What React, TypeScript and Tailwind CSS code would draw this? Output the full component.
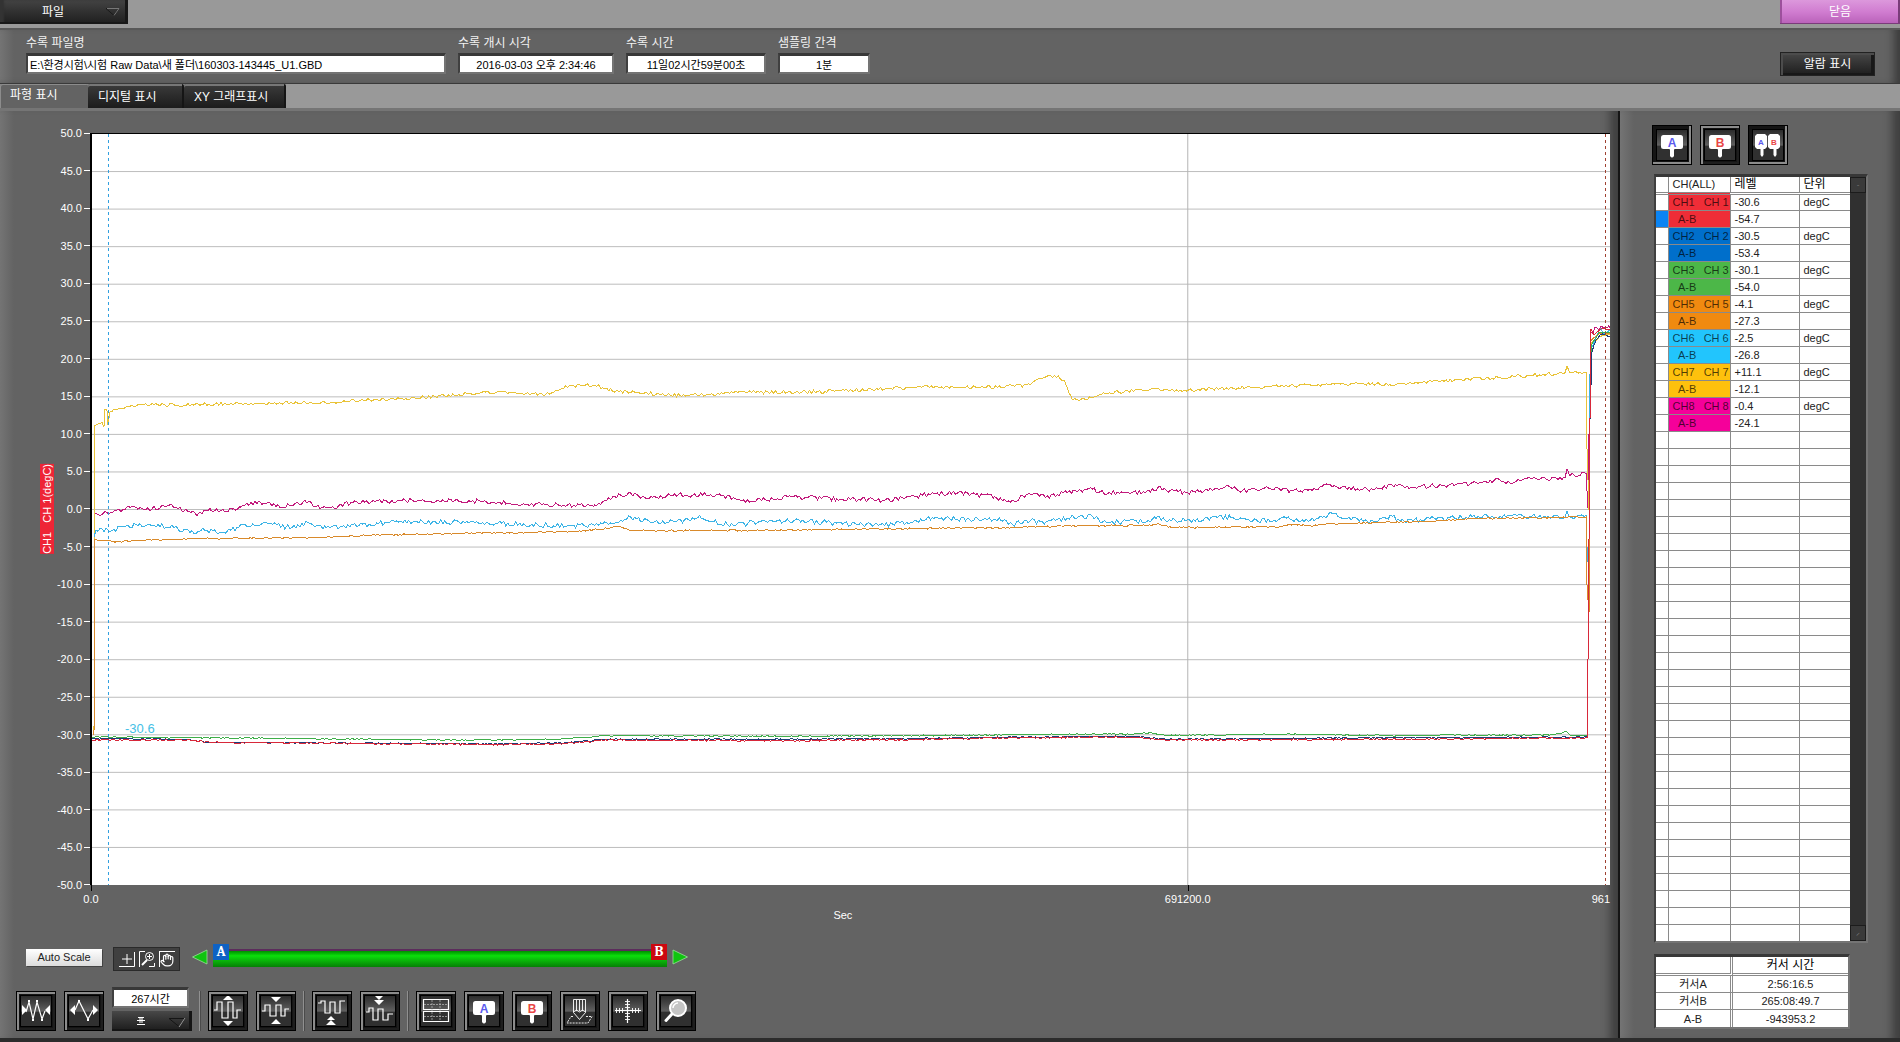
import { useState } from "react";
import type { ReactNode } from "react";
import { clsx } from "clsx";
import { Hand } from "lucide-react";

type Point = [number, number];

type Channel = {
  id: number;
  stroke: string;
  cell: string;
  level: string;
  diff: string;
  noise: number;
  points: Point[];
};

const PLOT_W = 1519;
const PLOT_H = 751;
const ROW_COUNT = 44;

const channels: Channel[] = [
  {
    id: 1,
    stroke: "#d8283a",
    cell: "bg-[#ef2d37]",
    level: "-30.6",
    diff: "-54.7",
    noise: 0.1,
    points: [
      [0, -30.7], [90, -30.7], [119, -31], [394, -31.3], [466, -31.2], [515, -30.7], [690, -30.8],
      [830, -30.6], [920, -30.4], [1045, -30.3], [1074, -30.7], [1300, -30.6], [1496, -30.4],
      [1497, -20], [1499, 12], [1500, 24], [1503, 23.2], [1509, 24], [1519, 24],
    ],
  },
  {
    id: 2,
    stroke: "#1d3f7a",
    cell: "bg-[#006fcb]",
    level: "-30.5",
    diff: "-53.4",
    noise: 0.08,
    points: [
      [0, -30.5], [90, -30.6], [119, -31], [394, -31.2], [466, -31.1], [515, -30.6], [690, -30.6],
      [830, -30.5], [920, -30.3], [1045, -30.2], [1074, -30.6], [1300, -30.4], [1496, -30.3],
      [1497, -20], [1499, 12], [1501, 21], [1505, 22.6], [1511, 23.4], [1519, 23],
    ],
  },
  {
    id: 3,
    stroke: "#3fae49",
    cell: "bg-[#4cb748]",
    level: "-30.1",
    diff: "-54.0",
    noise: 0.08,
    points: [
      [0, -30.3], [119, -30.4], [360, -30.7], [466, -30.6], [515, -30.1], [690, -30.2], [830, -30.1],
      [920, -30], [1045, -29.9], [1058, -29.7], [1074, -30.1], [1190, -29.9], [1300, -30.1],
      [1460, -30], [1476, -29.6], [1480, -30.1], [1496, -30.1], [1497, -20], [1499, 12],
      [1501, 22], [1508, 23.6], [1519, 23.6],
    ],
  },
  {
    id: 5,
    stroke: "#d98a2b",
    cell: "bg-[#f08a10]",
    level: "-4.1",
    diff: "-27.3",
    noise: 0.1,
    points: [
      [2, -30], [3, -4], [24, -4.3], [50, -4.1], [100, -3.9], [150, -3.8], [240, -3.7], [280, -3.4],
      [330, -3.3], [490, -2.9], [527, -2.3], [540, -2.8], [660, -2.8], [780, -2.6], [920, -2.4],
      [970, -2.2], [1060, -2.1], [1067, -1.9], [1080, -2.4], [1110, -2.4], [1190, -2.3], [1202, -2],
      [1220, -2.2], [1240, -1.9], [1330, -1.6], [1390, -1.2], [1495, -1], [1496, -10], [1498, -14],
      [1499, 12], [1500, 22.5], [1508, 23.4], [1519, 23.4],
    ],
  },
  {
    id: 6,
    stroke: "#3db4e6",
    cell: "bg-[#22c5fd]",
    level: "-2.5",
    diff: "-26.8",
    noise: 0.35,
    points: [
      [2, -3.6], [4, -2.8], [20, -2.8], [34, -2.2], [84, -2.2], [86, -2.6], [102, -3.2], [109, -2.8],
      [124, -3], [139, -2.8], [151, -2], [179, -1.9], [194, -2.4], [217, -1.8], [234, -2.4],
      [259, -2.1], [309, -1.6], [394, -1.8], [478, -2.2], [503, -2.1], [515, -1.8], [539, -1],
      [569, -1.9], [606, -1.1], [636, -2], [697, -1.5], [745, -1.8], [787, -2.1], [842, -1.2],
      [909, -1.4], [921, -2], [939, -1.5], [954, -1.7], [979, -1.1], [1001, -0.9], [1011, -1.7],
      [1059, -1.6], [1066, -0.9], [1074, -1.5], [1094, -1.5], [1139, -1], [1159, -1.6], [1189, -1.2],
      [1219, -1.5], [1241, -0.5], [1254, -1.2], [1281, -1.5], [1301, -0.9], [1309, -1.5], [1363, -1.1],
      [1439, -0.9], [1474, -1], [1476, -0.2], [1479, -1], [1495, -0.8], [1496, -5], [1498, -9],
      [1499, 18], [1500, 21.5], [1508, 23.8], [1519, 23.8],
    ],
  },
  {
    id: 7,
    stroke: "#e9c338",
    cell: "bg-[#fec10d]",
    level: "+11.1",
    diff: "-12.1",
    noise: 0.22,
    points: [
      [2, -30], [3, 11.2], [10, 11.6], [12, 11], [13, 13.4], [15, 13.2], [16, 11.2], [18, 13],
      [24, 13.3], [50, 13.9], [109, 14], [200, 14.2], [240, 14.3], [329, 14.9], [394, 15.6],
      [418, 15.6], [454, 15.3], [478, 16.5], [503, 16.5], [527, 15.7], [588, 15.2], [660, 15.6],
      [733, 15.7], [830, 16.3], [909, 16.3], [939, 16.6], [949, 17.5], [967, 17.8], [974, 16.8],
      [981, 14.6], [994, 14.6], [1014, 15.5], [1059, 16], [1097, 15.9], [1159, 16.3], [1259, 16.7],
      [1309, 16.7], [1363, 17.2], [1424, 17.7], [1474, 18.2], [1476, 19.1], [1479, 18.2], [1495, 18.3],
      [1496, 8], [1498, 0], [1499, 14], [1500, 22], [1508, 23], [1519, 23.2],
    ],
  },
  {
    id: 8,
    stroke: "#c21a7c",
    cell: "bg-[#f5009a]",
    level: "-0.4",
    diff: "-24.1",
    noise: 0.3,
    points: [
      [3, -0.6], [19, -0.4], [34, 0.2], [44, 0.3], [54, 0], [74, 0.4], [84, 0.3], [99, -0.4],
      [106, -0.6], [119, -0.1], [134, -0.2], [149, 0.3], [151, 0.6], [166, 1], [184, 0.4], [199, 0.6],
      [217, 1.1], [224, 0.4], [239, 0.3], [259, 0.9], [284, 1.1], [329, 1.2], [394, 1.1], [454, 0.6],
      [503, 0.6], [521, 1.7], [539, 2.2], [557, 1.4], [587, 2], [624, 1.9], [660, 1.1], [696, 1.7],
      [745, 1.4], [793, 1.2], [842, 2.1], [866, 2.2], [903, 1.7], [923, 1.1], [931, 1.9], [946, 2.1],
      [956, 1.8], [989, 2.6], [1001, 2.7], [1012, 2.2], [1059, 2.3], [1067, 3], [1071, 2.6],
      [1094, 2.3], [1109, 2.5], [1139, 3], [1151, 2.5], [1184, 2.9], [1199, 2.5], [1219, 2.7],
      [1239, 3.3], [1246, 3], [1281, 2.7], [1304, 3.3], [1314, 2.9], [1329, 3.1], [1363, 3.2],
      [1389, 3.6], [1409, 3.9], [1419, 3.5], [1439, 4.2], [1474, 4.2], [1476, 5.4], [1479, 4.5],
      [1495, 4.8], [1497, 0.2], [1498, 10], [1500, 23.6], [1506, 24.2], [1519, 24.2],
    ],
  },
];

const toY = (v: number) => ((50 - v) / 100) * PLOT_H;

// Resamples the key points every 2px and adds a repeatable sensor jitter.
function tracePath({ id, points, noise }: Channel) {
  let seed = id * 7919;
  const random = () => {
    seed = (seed * 16807) % 2147483647;
    return seed / 2147483647 - 0.5;
  };
  const out: string[] = [];
  for (let i = 0; i < points.length - 1; i++) {
    const [x0, v0] = points[i];
    const [x1, v1] = points[i + 1];
    out.push(`${x0} ${toY(v0).toFixed(1)}`);
    for (let x = x0 + 2; x < x1; x += 2) {
      const v = v0 + ((v1 - v0) * (x - x0)) / (x1 - x0);
      out.push(`${x} ${toY(v + random() * noise * 2).toFixed(1)}`);
    }
  }
  const [lx, lv] = points[points.length - 1];
  out.push(`${lx} ${toY(lv).toFixed(1)}`);
  return `M${out.join("L")}`;
}

// CH1 is the selected channel, so it is painted last and stays on top.
const traces = channels.map((c) => ({ id: c.id, stroke: c.stroke, d: tracePath(c) })).reverse();
const yTicks = Array.from({ length: 21 }, (_, i) => 50 - i * 5);

const fields = [
  { id: "file", label: "수록 파일명", value: "E:\\환경시험\\시험 Raw Data\\새 폴더\\160303-143445_U1.GBD", box: "w-[420px]", align: "text-left" },
  { id: "start", label: "수록 개시 시각", value: "2016-03-03 오후 2:34:46", box: "w-[156px]", align: "text-center" },
  { id: "length", label: "수록 시간", value: "11일02시간59분00초", box: "w-[140px]", align: "text-center" },
  { id: "interval", label: "샘플링 간격", value: "1분", box: "w-[92px]", align: "text-center" },
];

const tabs = [
  { label: "파형 표시", width: "w-[88px]" },
  { label: "디지털 표시", width: "w-[96px]" },
  { label: "XY 그래프표시", width: "w-[102px]" },
];

const cursorRows = [
  ["커서A", "2:56:16.5"],
  ["커서B", "265:08:49.7"],
  ["A-B", "-943953.2"],
];

const sunken =
  "border-2 border-t-[3px] border-t-[#383838] border-l-[#404040] border-r-[#747474] border-b-[#747474]";

function IconButton({ label, pressed, children }: { label: string; pressed?: boolean; children: ReactNode }) {
  return (
    <button
      aria-label={label}
      className={clsx(
        "size-10 shrink-0 border border-black bg-[#141414] p-[3px]",
        pressed
          ? "shadow-[inset_-2px_-2px_0_#8c8c8c]"
          : "shadow-[inset_2px_2px_0_#8c8c8c,inset_-2px_-2px_0_#1e1e1e]"
      )}>
      <span className="block size-8 border border-black bg-linear-to-b from-[#2c2c2c] via-[#606060] via-50% to-[#303030] to-55%">
        <svg viewBox="5 5 30 30" className="size-[30px]" fill="none" stroke="white" strokeWidth="1.2">
          {children}
        </svg>
      </span>
    </button>
  );
}

function Marker({ letter, color }: { letter: string; color: string }) {
  return (
    <g stroke="none">
      <rect x="9" y="10" width="22" height="14" rx="2.5" fill="white" />
      <path d="M17 23h6l-1 2v6q-2 3-4 0v-6z" fill="white" />
      <text x="20" y="21.500" textAnchor="middle" fontSize="12" fontWeight="bold" fill={color}>
        {letter}
      </text>
    </g>
  );
}

function MarkerPair() {
  return (
    <g stroke="none" fontSize="8" fontWeight="bold" textAnchor="middle">
      <path d="M9 9h8l2 2v11l-2 2h-1.500v6l-1.500 2-1.500-2v-6H9l-2-2V11zM22 9h8l2 2v11l-2 2h-1.500v6L27 32l-1.500-2v-6H22l-2-2V11z" fill="white" />
      <text x="13" y="19.500" fill="#5a5aee">A</text>
      <text x="26" y="19.500" fill="#e84646">B</text>
    </g>
  );
}

function Chart() {
  return (
    <div className="flex grow flex-col">
      <div className="flex grow">
        <div className="flex w-[42px] items-center justify-end">
          <span className="rotate-180 whitespace-pre bg-[#ee2536] text-[11px] leading-[14px] text-white [writing-mode:vertical-rl]">
            {"CH1   CH 1(degC)"}
          </span>
        </div>
        <div className="-my-2 flex w-9 flex-col justify-between text-right text-[11px] leading-4 text-white">
          {yTicks.map((t) => (
            <div key={t} className="flex items-center justify-end gap-0.5">
              {t.toFixed(1)}
              <span className="h-px w-1.5 bg-white" />
            </div>
          ))}
        </div>
        <div className="relative grow border-l-2 border-t border-black bg-white">
          <svg
            className="absolute inset-0 size-full"
            viewBox={`0 0 ${PLOT_W} ${PLOT_H}`}
            preserveAspectRatio="none"
            fill="none"
            shapeRendering="crispEdges">
            {yTicks.slice(1, -1).map((t) => (
              <line key={t} x1="0" x2={PLOT_W} y1={toY(t)} y2={toY(t)} stroke="#bdbdbd" />
            ))}
            <line x1="1096.500" x2="1096.500" y1="0" y2={PLOT_H} stroke="#b4b4b4" />
            {traces.map((t) => (
              <path key={t.id} d={t.d} stroke={t.stroke} vectorEffect="non-scaling-stroke" />
            ))}
            <line x1="16.500" x2="16.500" y1="0" y2={PLOT_H} stroke="#2f9fe0" strokeDasharray="3 3" />
            <line x1="1514.500" x2="1514.500" y1="0" y2={PLOT_H} stroke="#a04030" strokeDasharray="3 3" />
          </svg>
          <span className="absolute left-[33px] top-[79%] -translate-y-1.5 text-[13px] leading-4 text-[#45bfe6]">
            -30.6
          </span>
        </div>
      </div>
      <div className="relative ml-[79px] h-[38px] text-[11px] leading-4 text-white">
        <span className="absolute left-0 top-0 h-1.5 w-px bg-black" />
        <span className="absolute left-0 top-1.5 -translate-x-1/2">0.0</span>
        <span className="absolute left-[72.200%] top-0 h-1.5 w-px bg-black" />
        <span className="absolute left-[72.200%] top-1.5 -translate-x-1/2">691200.0</span>
        <span className="absolute right-0 top-1.5">961</span>
        <span className="absolute left-[49.500%] top-[22px] -translate-x-1/2">Sec</span>
      </div>
    </div>
  );
}

function CursorRange() {
  const [a, setA] = useState(0);
  const [b, setB] = useState(100);

  return (
    <div className="ml-3 flex h-7 items-center">
      <button aria-label="이전" className="size-4">
        <svg viewBox="0 0 16 16" className="size-4">
          <path d="M0.500 8 15 1V15Z" fill="#10c410" stroke="#9ae09a" strokeWidth="0.800" />
        </svg>
      </button>
      <div className="relative mx-[5px] h-7 w-[454px] pt-1.5">
        <div className="h-[18px] w-full border-t-2 border-[#5c2c5c] bg-linear-to-b from-[#009000] via-[#0ce00c] via-30% to-[#068006]" />
        <span
          className="absolute top-px flex size-4 items-center justify-center bg-[#0e62c4] font-serif text-sm font-bold leading-4 text-white"
          style={{ left: `${a * 4.38}px` }}>
          A
        </span>
        <span
          className="absolute top-px flex size-4 items-center justify-center bg-[#cc0810] font-serif text-sm font-bold leading-4 text-white"
          style={{ left: `${b * 4.38}px` }}>
          B
        </span>
        <input type="range" aria-label="커서A" value={a} onChange={(e) => setA(Math.min(+e.target.value, b))} className="absolute left-0 top-0 h-3.5 w-full opacity-0" />
        <input type="range" aria-label="커서B" value={b} onChange={(e) => setB(Math.max(+e.target.value, a))} className="absolute bottom-0 left-0 h-3.5 w-full opacity-0" />
      </div>
      <button aria-label="다음" className="size-4">
        <svg viewBox="0 0 16 16" className="size-4">
          <path d="M15.500 8 1 1V15Z" fill="#10c410" stroke="#9ae09a" strokeWidth="0.800" />
        </svg>
      </button>
    </div>
  );
}

function Separator() {
  return (
    <div className="flex w-4 justify-center">
      <span className="w-0.5 border-l border-[#909090] bg-[#4a4a4a]" />
    </div>
  );
}

function Toolbar() {
  return (
    <div className="flex h-10">
      <div className="flex gap-2">
        <IconButton label="시간축 축소">
          <path d="M6 14v10l5-5zM34 14v10l-5-5z" fill="white" stroke="none" />
          <path d="m10 21 3-10 4 17 4-17 5 17 3-8" />
          <path d="M12 9h2v2h-2zM20 9h2v2h-2zM16 28h2v2h-2zM25 28h2v2h-2z" fill="white" stroke="none" />
        </IconButton>
        <IconButton label="시간축 확대">
          <path d="M11 14v10l-5-5zM29 14v10l5-5z" fill="white" stroke="none" />
          <path d="m11 19 4-9 9 18 5-9" />
          <path d="M14 9h2v2h-2zM23 28h2v2h-2z" fill="white" stroke="none" />
        </IconButton>
        <div className="w-20">
          <input
            readOnly
            aria-label="표시 시간"
            value="267시간"
            className={clsx("-mt-1 block h-[21px] w-[77px] bg-white text-center text-[11px] leading-4 text-black", sunken)}
          />
          <div className="relative mt-[3px] h-5 bg-linear-to-b from-[#484848] to-[#1c1c1c] shadow-[inset_-3px_-2px_0_#151515]">
            <select aria-label="표시 시간 선택" className="size-full appearance-none opacity-0">
              <option>267시간</option>
            </select>
            <svg viewBox="0 0 80 20" className="pointer-events-none absolute inset-0" fill="none" stroke="white">
              <path d="M26 6.500h6M25 9.500h8M25 13.500h8M28 7v5M30 7v5" />
              <path d="M57 7.500h16l-6 8z" stroke="#151515" />
              <path d="m73 7-6 9" stroke="#9a9a9a" />
            </svg>
          </div>
        </div>
      </div>
      <Separator />
      <div className="flex gap-2">
        <IconButton label="진폭 확대">
          <path d="m20 4 5 5H15zM15 30h10l-5 5z" fill="white" stroke="none" />
          <path d="M6 19h3v-8h5v16h6V11h5v16h4v-8h4" />
        </IconButton>
        <IconButton label="진폭 축소">
          <path d="M15 6h10l-5 5zM20 28l5 5H15z" fill="white" stroke="none" />
          <path d="M6 20h3v-6h5v11h6V14h5v11h4v-7h4" />
        </IconButton>
      </div>
      <Separator />
      <div className="flex gap-2">
        <IconButton label="위로 이동">
          <path d="M6 12h3v-2h4v12h5V11h5v11h5V10h5" />
          <path d="m19 25 4 4h-8zM19 29l5 5H14z" fill="white" stroke="none" />
        </IconButton>
        <IconButton label="아래로 이동">
          <path d="M6 21h3v-4h4v12h5V18h5v11h5v-6h5" />
          <path d="M15 5h8l-4 4zM14 9h10l-5 5z" fill="white" stroke="none" />
        </IconButton>
      </div>
      <Separator />
      <div className="flex gap-2">
        <IconButton label="그리드">
          <path d="M7.500 8.500h25v10h-25zM7.500 20.500h25v10h-25z" />
          <path d="M8 13.500h24M8 25.500h24M16 9v21M24 9v21" strokeWidth="0.700" strokeDasharray="2 1" stroke="#bbb" />
        </IconButton>
        <IconButton label="커서 A">
          <Marker letter="A" color="#5a5aee" />
        </IconButton>
        <IconButton label="커서 B">
          <Marker letter="B" color="#e84646" />
        </IconButton>
        <IconButton label="메모">
          <path d="M13.500 8.500h12v13l-6 7-6-7zM16.500 9v11M19.500 9v11M22.500 9v11M13.500 21l3-2 3 2 3-2 3 2" strokeWidth="0.900" />
          <path d="M11 25.500h2M26 25.500h6l-4 6.500H7l4-6.500" strokeDasharray="2 1" strokeWidth="0.900" />
        </IconButton>
        <IconButton label="눈금">
          <path d="M7 19.500h26M19.500 8v24" />
          <path d="M8.500 17v5M11.500 17v5M14.500 17v5M24.500 17v5M27.500 17v5M30.500 17v5M17 10.500h5M17 13.500h5M17 16.500h5M17 22.500h5M17 25.500h5M17 28.500h5" strokeWidth="0.900" />
        </IconButton>
        <IconButton label="검색">
          <path d="m16 23-6 6.500" strokeWidth="3" strokeLinecap="round" />
          <circle cx="22" cy="17" r="8" fill="#c4c4c4" strokeWidth="2" />
          <path d="M17 17a5 5 0 0 1 5-5" stroke="#fff" strokeWidth="1.500" />
        </IconButton>
      </div>
    </div>
  );
}

function ChannelTable() {
  const rows = channels.flatMap((c) => [
    { cell: c.cell, name: `CH${c.id}   CH ${c.id}`, level: c.level, unit: "degC" },
    { cell: c.cell, name: "  A-B", level: c.diff, unit: "" },
  ]);

  return (
    <div className={clsx("ml-[34px] flex w-[214px]", sunken)}>
      <table className="w-[194px] table-fixed border-collapse bg-white text-[11px] leading-[14px] text-[#222]">
        <colgroup>
          <col className="w-[12px]" />
          <col className="w-[62px]" />
          <col className="w-[69px]" />
          <col className="w-[51px]" />
        </colgroup>
        <thead>
          <tr className="h-4 border-b-3 border-double border-[#8a8a8a] text-left">
            <th className="border-r border-[#8a8a8a]" />
            <th className="border-r border-[#8a8a8a] pl-1 font-normal">CH(ALL)</th>
            <th className="border-r border-[#8a8a8a] pl-1 text-xs leading-[14px] font-normal text-black">레벨</th>
            <th className="pl-1 text-xs leading-[14px] font-normal text-black">단위</th>
          </tr>
        </thead>
        <tbody>
          {Array.from({ length: ROW_COUNT }, (_, i) => {
            const row = rows[i];
            return (
              <tr key={i} className={clsx("h-[17px]", i < ROW_COUNT - 1 && "border-b border-[#8a8a8a]")}>
                <td className={clsx("border-r border-[#8a8a8a]", i === 1 && "bg-[#0a84f4]")} />
                <td className={clsx("whitespace-pre border-r border-[#8a8a8a] pl-1 text-black/70", row?.cell)}>{row?.name}</td>
                <td className="border-r border-[#8a8a8a] pl-1">{row?.level}</td>
                <td className="pl-1">{row?.unit}</td>
              </tr>
            );
          })}
        </tbody>
      </table>
      <div className="flex grow flex-col justify-between bg-[#303030]">
        <button aria-label="위로" className="h-4 border border-[#1c1c1c] bg-[#3a3a3a] text-[8px] leading-3 text-[#777]">
          -
        </button>
        <button aria-label="아래로" className="h-4 border border-[#1c1c1c] bg-[#3a3a3a] text-[8px] leading-3 text-[#888]">
          ⸝
        </button>
      </div>
    </div>
  );
}

function CursorTable() {
  return (
    <table className={clsx("ml-[34px] w-[196px] table-fixed border-separate border-spacing-0 bg-white text-center text-[11px] leading-4 text-[#222]", sunken)}>
      <colgroup>
        <col className="w-[77px]" />
        <col />
      </colgroup>
      <thead>
        <tr className="h-[19px]">
          <th className="border-b-3 border-r-3 border-double border-[#8a8a8a]" />
          <th className="border-b-3 border-double border-[#8a8a8a] text-xs leading-4 font-normal text-black">커서 시간</th>
        </tr>
      </thead>
      <tbody>
        {cursorRows.map(([name, value], i) => (
          <tr key={name} className="h-[17px]">
            <td className={clsx("border-r-3 border-[#8a8a8a] [border-right-style:double]", i < 2 && "border-b")}>{name}</td>
            <td className={clsx("border-[#8a8a8a]", i < 2 && "border-b")}>{value}</td>
          </tr>
        ))}
      </tbody>
    </table>
  );
}

export default function App() {
  const [activeTab, setActiveTab] = useState(0);

  return (
    <div className="flex min-h-screen flex-col bg-[#636363] font-['Liberation_Sans','Noto_Sans_CJK_KR',sans-serif]">
      <header className="flex h-7 items-start justify-between bg-[#999999]">
        <button className="flex h-6 w-32 items-center bg-linear-to-b from-[#444] to-[#1e1e1e] pl-[42px] text-xs text-white shadow-[inset_-3px_-2px_0_#181818,inset_4px_0_2px_#333]">
          파일
          <svg viewBox="0 0 16 10" className="ml-auto mr-[7px] h-2.5 w-4" fill="none">
            <path d="M1 1.500h13l-5 7z" stroke="#191919" />
            <path d="M2 1.500h12l-5 7" stroke="#777" />
          </svg>
        </button>
        <button className="h-6 w-[120px] bg-linear-to-b from-[#dc98dc] via-[#d07cd0] to-[#b860b8] text-xs text-white shadow-[inset_-2px_-1px_0_#7a3c7a,inset_2px_0_0_#9c509c]">
          닫음
        </button>
      </header>

      <section className="flex h-14 items-start border-b border-[#3a3a3a] bg-linear-to-r from-[#747474] to-[#636363] to-[14px] pl-[26px] pr-[25px] shadow-[inset_0_2px_0_#585858,inset_-10px_0_8px_-4px_#3c3c3c]">
        <div className="flex gap-3">
          {fields.map((f) => (
            <label key={f.id} htmlFor={f.id} className="pt-[6px] text-xs leading-[18px] text-[#f2f2f2]">
              {f.label}
              <input
                id={f.id}
                readOnly
                defaultValue={f.value}
                className={clsx("mt-px block h-[21px] bg-white px-0.5 text-[11px] leading-4 text-black", sunken, f.box, f.align)}
              />
            </label>
          ))}
        </div>
        <button className="ml-auto mt-6 h-6 w-[95px] border border-[#222] bg-linear-to-b from-[#484848] to-[#1e1e1e] text-xs text-white shadow-[inset_2px_2px_0_#4c4c4c,inset_-3px_-2px_0_#181818]">
          알람 표시
        </button>
      </section>

      <nav role="tablist" className="flex h-6 bg-[#999999]">
        {tabs.map((t, i) => (
          <button
            key={t.label}
            role="tab"
            aria-selected={i === activeTab}
            onClick={() => setActiveTab(i)}
            className={clsx(
              "whitespace-nowrap rounded-t-xs px-2.5 text-left text-xs text-white",
              t.width,
              i === activeTab
                ? "bg-[#636363] pb-0.5 shadow-[inset_1px_1px_0_#8c8c8c]"
                : "border-r-2 border-[#151515] bg-linear-to-b from-[#3c3c3c] to-[#1c1c1c] pt-0.5 shadow-[inset_0_2px_0_#777]"
            )}>
            {t.label}
          </button>
        ))}
      </nav>

      <main className="flex grow border-b-4 border-t-[3px] border-b-[#2c2c2c] border-t-[#757575]">
        <section className="flex grow flex-col border-r-2 border-[#151515] bg-linear-to-r from-[#747474] to-[#636363] to-[14px] pb-[7px] pt-[22px] shadow-[inset_-14px_0_8px_-6px_#404040]">
          <div className="flex grow flex-col pl-3 pr-2">
            <Chart />
          </div>
          <div className="mt-5 flex h-7 items-center pl-[26px]">
            <button className="h-[17px] w-[76px] bg-linear-to-b from-white to-[#dcdcdc] text-[11px] leading-4 text-[#222] shadow-[1px_1px_0_#444]">
              Auto Scale
            </button>
            <div className="ml-[11px] mt-1 flex h-6 w-[67px] items-center justify-center gap-1 border border-[#2a2a2a] bg-[#404040]">
              <button aria-label="십자 커서" className="size-4">
                <svg viewBox="0 0 16 16" className="size-4" fill="none" stroke="white">
                  <path d="M15.500 1v14.500H0M8 3v10M3 8h10" />
                </svg>
              </button>
              <button aria-label="확대" className="size-4">
                <svg viewBox="0 0 16 16" className="size-4" fill="none" stroke="white">
                  <path d="M.5 16V.5H6M10 15.500h5.500V12" />
                  <circle cx="10.500" cy="5.500" r="4" />
                  <path d="M8 5.500h5M10.500 3v5" />
                  <path d="m8 9-5 5" strokeWidth="2" />
                </svg>
              </button>
              <button aria-label="이동" className="flex size-4 items-center justify-center border-l border-t border-white">
                <Hand className="size-3.5 text-white" />
              </button>
            </div>
            <CursorRange />
          </div>
          <div className="mt-5 pl-4">
            <Toolbar />
          </div>
        </section>

        <aside className="w-[280px] shrink-0 bg-linear-to-r from-[#747474] to-[#636363] to-[14px] pt-3.5 shadow-[inset_-14px_0_8px_-6px_#404040]">
          <div className="flex gap-2 pl-8">
            <IconButton label="커서 A" pressed>
              <Marker letter="A" color="#5a5aee" />
            </IconButton>
            <IconButton label="커서 B">
              <Marker letter="B" color="#e84646" />
            </IconButton>
            <IconButton label="커서 A와 B" pressed>
              <MarkerPair />
            </IconButton>
          </div>
          <div className="mt-[9px]">
            <ChannelTable />
          </div>
          <div className="mt-[11px]">
            <CursorTable />
          </div>
        </aside>
      </main>
    </div>
  );
}
